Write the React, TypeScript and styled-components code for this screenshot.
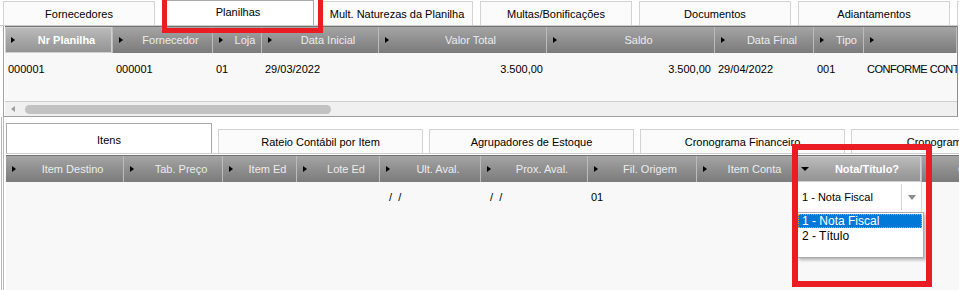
import React from "react";
import styled, { createGlobalStyle, css } from "styled-components";

const GlobalStyle = createGlobalStyle`
  html, body { margin: 0; padding: 0; background: #ffffff; }
  body {
    font-family: "Liberation Sans", Arial, Helvetica, sans-serif;
    font-size: 11px;
    color: #000000;
  }
  * { box-sizing: border-box; }
`;

const Screen = styled.div`
  position: relative;
  width: 959px;
  height: 290px;
  overflow: hidden;
  background: #ffffff;
  display: flex;
  flex-direction: column;
`;

/* ---------- tabs ---------- */

const TabBar = styled.div<{ $h: number; $gap: number; $padTop?: number; $padLeft?: number }>`
  flex: none;
  display: flex;
  align-items: flex-end;
  height: ${(p) => p.$h}px;
  gap: ${(p) => p.$gap}px;
  padding-top: ${(p) => p.$padTop ?? 0}px;
  padding-left: ${(p) => p.$padLeft ?? 0}px;
  border-bottom: 1px solid #cdcdcd;
  overflow: hidden;
`;

const Tab = styled.div<{ $active?: boolean; $w: number; $h: number; $textTop?: number }>`
  flex: none;
  width: ${(p) => p.$w}px;
  height: ${(p) => p.$h}px;
  display: flex;
  justify-content: center;
  align-items: center;
  padding-top: 1px;
  line-height: 14px;
  white-space: nowrap;
  color: #000000;
  background: #fbfbfb;
  border: 1px solid #d3d3d3;
  border-bottom: none;
  ${(p) =>
    p.$active &&
    css`
      align-items: flex-start;
      padding-top: ${p.$textTop ?? 4}px;
      background: #ffffff;
      border-color: #a9a9a9;
    `}
`;

/* ---------- grid ---------- */

const GridPanel = styled.div`
  flex: none;
  margin-left: 3px;
  width: 955px;
  padding-left: 1px;
  border-left: 1px solid #a3a3a3;
  border-right: 1px solid #8e8e8e;
  border-bottom: 1px solid #a0a0a0;
  display: flex;
  flex-direction: column;
  overflow: hidden;
`;

const HeaderRow = styled.div<{ $cols: string; $h: number; $mt?: number }>`
  flex: none;
  display: grid;
  grid-template-columns: ${(p) => p.$cols};
  height: ${(p) => p.$h}px;
  margin-top: ${(p) => p.$mt ?? 0}px;
  border-top: 1px solid #727272;
  background: #7d7d7d;
`;

const HeaderCell = styled.div<{ $sorted?: boolean }>`
  display: flex;
  align-items: center;
  min-width: 0;
  overflow: hidden;
  white-space: nowrap;
  color: #ececec;
  background: linear-gradient(to bottom, #a5a5a5 0%, #8f8f8f 50%, #7b7b7b 100%);
  border-right: 1px solid #bcbcbc;
  ${(p) =>
    p.$sorted &&
    css`
      color: #ffffff;
      font-weight: bold;
      background: linear-gradient(to bottom, #bdbdbd 0%, #a6a6a6 50%, #929292 100%);
      box-shadow: inset 0 0 0 1px #d0d0d0;
    `}
`;

const SortMark = styled.span<{ $down?: boolean }>`
  flex: none;
  width: 0;
  height: 0;
  ${(p) =>
    p.$down
      ? css`
          margin-left: 4px;
          border-top: 4px solid #000000;
          border-left: 4px solid transparent;
          border-right: 4px solid transparent;
        `
      : css`
          margin-left: 6px;
          border-left: 4px solid #000000;
          border-top: 3px solid transparent;
          border-bottom: 3px solid transparent;
        `}
`;

const HeaderLabel = styled.span<{ $down?: boolean }>`
  flex: 1;
  margin-left: ${(p) => (p.$down ? 4 : 6)}px;
  text-align: center;
  white-space: nowrap;
`;

const DataArea = styled.div<{ $h?: number }>`
  flex: ${(p) => (p.$h ? "none" : "1")};
  height: ${(p) => (p.$h ? `${p.$h}px` : "auto")};
  background: #f8f8f8;
`;

const DataRow = styled.div<{ $cols: string; $h: number }>`
  display: grid;
  grid-template-columns: ${(p) => p.$cols};
  height: ${(p) => p.$h}px;
  align-items: center;
`;

const DataCell = styled.div<{ $right?: boolean; $tight?: boolean }>`
  min-width: 0;
  overflow: hidden;
  white-space: pre;
  padding: ${(p) => (p.$right ? "0 4px 0 0" : "0 0 0 3px")};
  text-align: ${(p) => (p.$right ? "right" : "left")};
  letter-spacing: ${(p) => (p.$tight ? "-0.5px" : "normal")};
  color: #000000;
`;

/* ---------- scrollbar ---------- */

const HScroll = styled.div`
  flex: none;
  height: 15px;
  border-top: 1px solid #cfcfcf;
  background: #f0f0f0;
  display: flex;
  align-items: center;
`;

const ScrollArrow = styled.span`
  width: 0;
  height: 0;
  margin-left: 6px;
  border-right: 4px solid #9d9d9d;
  border-top: 3px solid transparent;
  border-bottom: 3px solid transparent;
`;

const ScrollThumb = styled.span`
  margin-left: 10px;
  width: 306px;
  height: 9px;
  border-radius: 5px;
  background: #c2c2c2;
`;

/* ---------- bottom section ---------- */

const OuterFrame = styled.div`
  flex: 1;
  min-height: 0;
  margin-left: 1px;
  padding-left: 1px;
  border-left: 1px solid #b8b8b8;
  display: flex;
`;

const InnerFrame = styled.div`
  flex: 1;
  min-width: 0;
  padding-left: 2px;
  border-left: 1px solid #b8b8b8;
  display: flex;
  flex-direction: column;
  overflow: hidden;
`;

/* ---------- combo ---------- */

const ComboCell = styled.div`
  position: relative;
  align-self: stretch;
  display: flex;
  align-items: center;
  background: #ffffff;
  border-right: 1px solid #d6d6d6;
`;

const ComboValue = styled.span`
  flex: 1;
  padding-left: 5px;
  white-space: nowrap;
`;

const ComboButton = styled.span`
  flex: none;
  width: 20px;
  align-self: stretch;
  margin: 2px 0;
  border-left: 1px solid #d2d2d2;
  display: flex;
  align-items: center;
  justify-content: center;
`;

const ComboArrow = styled.span`
  width: 0;
  height: 0;
  border-top: 5px solid #8a8a8a;
  border-left: 4.5px solid transparent;
  border-right: 4.5px solid transparent;
`;

const DropList = styled.div`
  position: absolute;
  top: 100%;
  left: 0;
  width: 127px;
  height: 46px;
  padding: 1px 1px 0 0;
  background: #ffffff;
  border: 1px solid #ababab;
  box-shadow: 2px 2px 3px rgba(0, 0, 0, 0.28);
  z-index: 5;
`;

const DropItem = styled.div<{ $selected?: boolean }>`
  height: 14px;
  margin-bottom: 1px;
  padding-left: 3px;
  font-size: 12px;
  line-height: 12px;
  white-space: nowrap;
  color: #000000;
  border: 1px solid transparent;
  ${(p) =>
    p.$selected &&
    css`
      background: #0078d7;
      color: #ffffff;
      border: 1px dotted #e9a23b;
    `}
`;

/* ---------- annotations ---------- */

const RedBox = styled.div<{ $l: number; $t: number; $w: number; $h: number; $b: number }>`
  position: absolute;
  left: ${(p) => p.$l}px;
  top: ${(p) => p.$t}px;
  width: ${(p) => p.$w}px;
  height: ${(p) => p.$h}px;
  border: ${(p) => p.$b}px solid #ea1c24;
  pointer-events: none;
  z-index: 10;
`;

/* ---------- data ---------- */

const topTabs = [
  "Fornecedores",
  "Planilhas",
  "Mult. Naturezas da Planilha",
  "Multas/Bonificações",
  "Documentos",
  "Adiantamentos",
  "Caução",
];

const topCols = "108px 100px 49px 117px 168px 168px 99px 50px 1fr";
const topHeaders = [
  "Nr Planilha",
  "Fornecedor",
  "Loja",
  "Data Inicial",
  "Valor Total",
  "Saldo",
  "Data Final",
  "Tipo",
  "",
];
const topRow: { v: string; r?: boolean; t?: boolean }[] = [
  { v: "000001" },
  { v: "000001" },
  { v: "01" },
  { v: "29/03/2022" },
  { v: "3.500,00", r: true },
  { v: "3.500,00", r: true },
  { v: "29/04/2022" },
  { v: "001" },
  { v: "CONFORME CONTRATO", t: true },
];

const bottomTabs = [
  "Itens",
  "Rateio Contábil por Item",
  "Agrupadores de Estoque",
  "Cronograma Financeiro",
  "Cronograma Físico",
];

const bottomCols = "118px 99px 74px 83px 101px 107px 109px 100px 125px 100px";
const bottomHeaders = [
  "Item Destino",
  "Tab. Preço",
  "Item Ed",
  "Lote Ed",
  "Ult. Aval.",
  "Prox. Aval.",
  "Fil. Origem",
  "Item Conta",
  "Nota/Título?",
  "C. Custo",
];
const bottomRow = ["", "", "", "", "  /  /", "  /  /", "01", "", "COMBO", ""];

export default function App() {
  return (
    <>
      <GlobalStyle />
      <Screen>
        <TabBar $h={26} $gap={7} $padLeft={3}>
          {topTabs.map((t, i) => (
            <Tab key={t} $w={152} $h={i === 1 ? 25 : 24} $active={i === 1} $textTop={4}>
              {t}
            </Tab>
          ))}
        </TabBar>

        <GridPanel>
          <HeaderRow $cols={topCols} $h={27}>
            {topHeaders.map((h, i) => (
              <HeaderCell key={i} $sorted={i === 0}>
                <SortMark />
                <HeaderLabel>{h}</HeaderLabel>
              </HeaderCell>
            ))}
          </HeaderRow>
          <DataArea $h={48}>
            <DataRow $cols={topCols} $h={32}>
              {topRow.map((c, i) => (
                <DataCell key={i} $right={c.r} $tight={c.t}>
                  {c.v}
                </DataCell>
              ))}
            </DataRow>
          </DataArea>
          <HScroll>
            <ScrollArrow />
            <ScrollThumb />
          </HScroll>
        </GridPanel>

        <OuterFrame>
          <InnerFrame>
            <TabBar $h={37} $gap={6} $padTop={6}>
              {bottomTabs.map((t, i) => (
                <Tab key={t} $w={i === 0 ? 206 : 205} $h={i === 0 ? 30 : 24} $active={i === 0} $textTop={9}>
                  {t}
                </Tab>
              ))}
            </TabBar>
            <HeaderRow $cols={bottomCols} $h={27} $mt={1}>
              {bottomHeaders.map((h, i) => (
                <HeaderCell key={i} $sorted={i === 8}>
                  <SortMark $down={i === 8} />
                  <HeaderLabel $down={i === 8}>{h}</HeaderLabel>
                </HeaderCell>
              ))}
            </HeaderRow>
            <DataArea>
              <DataRow $cols={bottomCols} $h={30}>
                {bottomRow.map((v, i) =>
                  v === "COMBO" ? (
                    <ComboCell key={i}>
                      <ComboValue>1 - Nota Fiscal</ComboValue>
                      <ComboButton>
                        <ComboArrow />
                      </ComboButton>
                      <DropList>
                        <DropItem $selected>1 - Nota Fiscal</DropItem>
                        <DropItem>2 - Título</DropItem>
                      </DropList>
                    </ComboCell>
                  ) : (
                    <DataCell key={i}>{v}</DataCell>
                  )
                )}
              </DataRow>
            </DataArea>
          </InnerFrame>
        </OuterFrame>

        <RedBox $l={162} $t={-10} $w={161} $h={43} $b={5} />
        <RedBox $l={792} $t={144} $w={140} $h={143} $b={6} />
      </Screen>
    </>
  );
}
